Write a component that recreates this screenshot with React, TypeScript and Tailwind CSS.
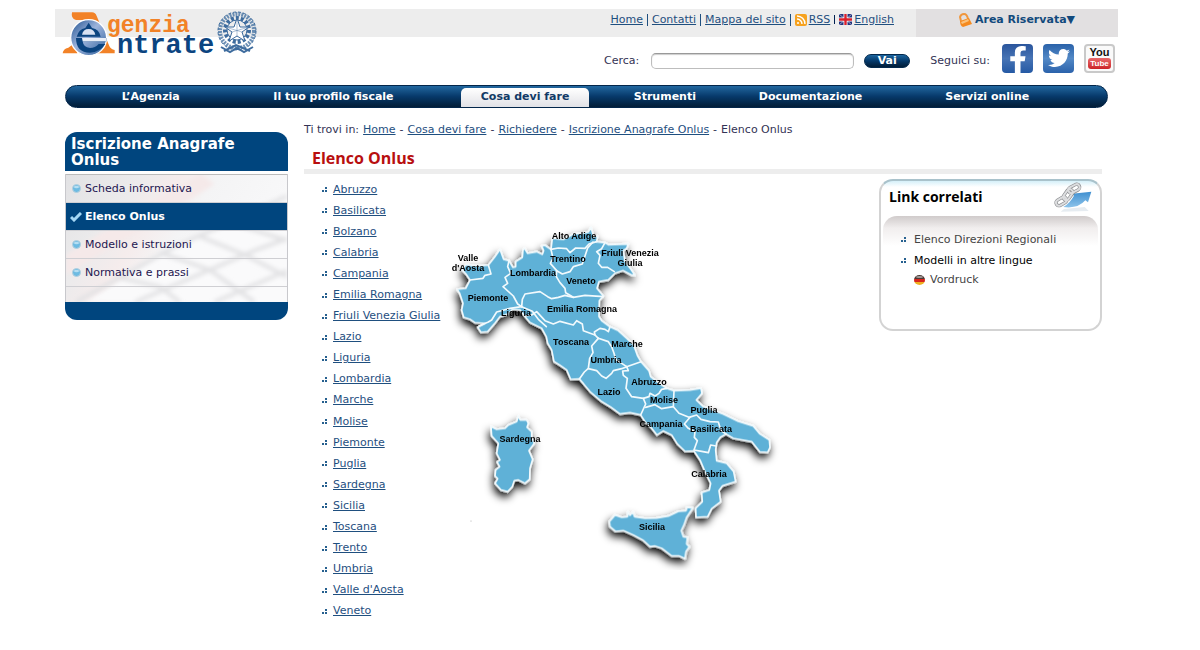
import { ReactNode } from 'react'
import clsx from 'clsx'
import { FaFacebookF, FaTwitter } from 'react-icons/fa'

const menu = [
  { label: 'L’Agenzia' },
  { label: 'Il tuo profilo fiscale', className: 'pr-[30px]' },
  { label: 'Cosa devi fare', active: true },
  { label: 'Strumenti' },
  { label: 'Documentazione' },
  { label: 'Servizi online', className: 'pr-[13px]' },
]

const sections = [
  { label: 'Scheda informativa' },
  { label: 'Elenco Onlus', active: true },
  { label: 'Modello e istruzioni' },
  { label: 'Normativa e prassi' },
]

const crumbs = ['Home', 'Cosa devi fare', 'Richiedere', 'Iscrizione Anagrafe Onlus']

const regions = [
  'Abruzzo',
  'Basilicata',
  'Bolzano',
  'Calabria',
  'Campania',
  'Emilia Romagna',
  'Friuli Venezia Giulia',
  'Lazio',
  'Liguria',
  'Lombardia',
  'Marche',
  'Molise',
  'Piemonte',
  'Puglia',
  'Sardegna',
  'Sicilia',
  'Toscana',
  'Trento',
  'Umbria',
  "Valle d'Aosta",
  'Veneto',
]

const mapLabels: [string, number, number][] = [
  ['Alto Adige', 129, 19],
  ['Trentino', 123, 42],
  ['Friuli Venezia', 185, 36],
  ['Giulia', 185, 46],
  ['Valle', 23, 41],
  ["d'Aosta", 23, 51],
  ['Lombardia', 88, 56],
  ['Veneto', 136, 64],
  ['Piemonte', 43, 81],
  ['Emilia Romagna', 137, 92],
  ['Liguria', 71, 96],
  ['Toscana', 126, 125],
  ['Marche', 182, 127],
  ['Umbria', 161, 143],
  ['Abruzzo', 204, 165],
  ['Lazio', 164, 175],
  ['Molise', 219, 183],
  ['Puglia', 259, 193],
  ['Campania', 216, 207],
  ['Basilicata', 266, 212],
  ['Calabria', 264, 257],
  ['Sardegna', 75, 222],
  ['Sicilia', 207, 310],
]

const mainland =
  'M52 150L62 134L96 138L130 135L150 110L165 88L176 118L192 122L204 142L212 140L212 125L232 112L234 90L239 85L248 100L275 95L292 103L296 92L290 78L300 76L318 88L322 55L355 58L385 42L412 40L430 36L438 22L446 50L458 48L455 65L480 68L490 74L550 72L545 85L535 92L540 125L558 148L570 166L560 165L534 152L510 160L490 180L462 185L456 205L475 228L463 242L462 290L470 302L494 320L520 332L545 355L566 375L578 408L588 425L612 452L617 470L640 488L665 505L687 512L735 510L768 505L771 520L754 540L775 560L835 582L880 604L925 618L945 642L973 660L975 682L968 697L945 696L920 665L865 655L843 642L826 652L815 668L812 690L815 722L845 730L866 755L872 785L832 798L822 812L827 845L800 866L788 890L753 892L752 865L772 845L770 818L793 810L797 790L780 755L765 720L747 693L720 694L697 672L680 645L655 633L636 645L620 625L600 605L587 585L555 578L525 582L498 562L470 545L435 515L416 492L403 477L377 478L365 450L345 436L327 425L320 390L308 370L304 350L290 325L255 308L240 290L225 270L202 268L190 282L165 290L148 312L128 335L108 337L98 322L120 310L90 308L75 298L56 292L50 270L54 250L44 220L36 208L62 205L75 180L65 165Z'

const borders = [
  'M75 180L114 175L120 166L138 162L130 135',
  'M192 122L188 140L197 160L180 172L188 190L174 200L205 228L218 252L230 260',
  'M230 260L232 238L240 222L285 215L308 230L320 236L340 232L360 226L385 232L420 226L475 230',
  'M102 318L130 306L140 300L155 276L195 265L230 260L262 274L280 298L304 320',
  'M318 88L324 115L316 130L335 152L334 170L345 188L360 205L362 218L385 232',
  'M318 88L340 84L365 86L375 98L392 84L420 85L432 72L455 65',
  'M335 152L352 162L375 155L385 140L412 132L420 108L428 84L444 66',
  'M480 68L470 86L455 95L465 106L460 130L470 142L488 142L508 155',
  'M240 288L260 285L275 275L300 302L325 312L345 304L385 315L395 302L412 312L415 332L450 345L460 355',
  'M450 345L448 336L465 325L480 328L490 335L495 320',
  'M460 355L440 378L444 398L434 415L430 445L418 456L403 477',
  'M430 446L455 452L470 468L483 475L500 460L505 452L530 446L545 440',
  'M460 355L490 365L500 380L507 400L512 418L545 440L588 425',
  'M545 440L550 452L533 453L535 466L547 475L543 505L560 530L595 535L602 552L587 585',
  'M595 535L612 530L615 520L630 528L642 520L650 508L665 505',
  'M602 562L630 554L650 566L685 560L687 512',
  'M685 560L702 580L732 592L755 585L768 598L795 605L820 606L828 632L843 642',
  'M735 592L718 612L730 625L750 635L748 652L757 662L747 690L770 694L790 698L797 675L813 678',
]

const sardegna =
  'M78 80L95 88L120 85L130 75L155 65L160 48L166 60L185 60L190 70L186 82L200 95L200 110L208 130L192 152L203 178L195 205L194 238L180 250L160 240L148 242L142 260L128 275L108 270L90 250L98 236L90 228L92 210L104 200L96 186L105 180L95 160L100 130L80 108Z'

const sicilia =
  'M58 275L75 255L95 262L112 260L114 246L120 256L128 246L134 260L165 265L200 264L235 258L265 244L288 242L291 232L308 234L290 262L282 285L274 302L280 320L292 322L290 342L298 350L288 365L285 386L268 378L245 378L215 355L195 348L180 350L158 330L130 315L100 302L76 304L60 290Z'

const Link = ({ children, className }: { children: ReactNode; className?: string }) => (
  <a href="#" className={clsx('text-[#1f4f7f] underline', className)}>
    {children}
  </a>
)

const Logo = () => (
  <svg width="200" height="54" viewBox="0 1 200 54" role="img" aria-label="Agenzia Entrate">
    <defs>
      <linearGradient id="logoBall" x1="0" y1="0" x2="1" y2="1">
        <stop offset="0" stopColor="#1d4f8e" />
        <stop offset="0.45" stopColor="#9db4dc" />
        <stop offset="1" stopColor="#2a5c99" />
      </linearGradient>
    </defs>
    <g transform="scale(.33333) translate(-30 -24)">
      <path d="M66 37H126Q136 37 140 48L177 136Q182 149 194 150V160H140V148H152L118 60H78Q62 56 66 37Z" fill="#f28227" />
      <path d="M38 160Q39 147 55 143L70 132L82 160Z" fill="#f28227" />
      <circle cx="116" cy="113" r="54" fill="url(#logoBall)" stroke="#fff" strokeWidth="4" />
      <path d="M116 68L106 84Q86 88 80 110L152 110Q148 88 126 84Z" fill="#0b4480" />
      <path d="M96 104Q99 87 116 87Q133 87 136 104Z" fill="#d8e1f2" />
      <path d="M78 114Q78 158 120 158Q150 156 166 132H146Q136 144 120 144Q100 142 98 124H170V114Z" fill="#0b4480" />
      <path d="M98 124H170V114H96Z" fill="#e9eef7" />
    </g>
    <text x="47" y="24" fontSize="23" fontWeight="700" className="fill-[#f28227] font-['Liberation_Mono',monospace]">
      genzia
    </text>
    <text x="57" y="45" fontSize="27" fontWeight="700" className="fill-[#0b4480] font-['Liberation_Mono',monospace]">
      ntrate
    </text>
    <g fill="none" stroke="#3e6c9e">
      <circle cx="177" cy="22" r="12" strokeWidth="4" strokeDasharray="3 2" />
      <circle cx="177" cy="22" r="10" />
      <circle cx="177" cy="23" r="17" strokeWidth="4" strokeDasharray="2 1" opacity=".75" />
      <circle cx="177" cy="23" r="19" strokeDasharray="3 2" />
      <path d="M161 39L170 44L177 40L184 44L193 39M164 43L176 37L190 43" strokeWidth="2" />
      <path d="M177 10L180 19H189L182 24L185 33L177 28L169 33L172 24L165 19H174Z" fill="#fff" strokeWidth="1" />
      <path d="M177 10V28M189 19L172 24M165 19L182 24" opacity=".4" />
    </g>
  </svg>
)

const RssIcon = () => (
  <svg width="12" height="12" viewBox="0 0 12 12" aria-hidden="true">
    <rect width="12" height="12" rx="2" fill="#f6a21f" />
    <circle cx="3" cy="9" r="1" fill="#fff" />
    <path d="M2 5A5 5 0 0 1 7 10M2 2A8 8 0 0 1 10 10" fill="none" stroke="#fff" strokeWidth="1.4" />
  </svg>
)

const UkFlag = () => (
  <svg width="13" height="11" viewBox="0 0 13 11" aria-hidden="true">
    <rect width="13" height="11" fill="#24347c" />
    <path d="M0 0L13 11M13 0L0 11" stroke="#9aa2c8" strokeWidth="1" />
    <path d="M6.5 0V11M0 5.5H13" stroke="#fff" strokeWidth="4" />
    <path d="M6.5 0V11M0 5.5H13" stroke="#d8202c" strokeWidth="2.4" />
  </svg>
)

const Padlock = () => (
  <svg width="13" height="15" viewBox="0 0 13 15" aria-hidden="true">
    <path d="M2 8L1 4Q2 1 5 1Q8 1 9 6" fill="none" stroke="#f0963c" strokeWidth="2" />
    <path d="M1 8L10 5L13 11L4 14Q1 13 1 8Z" fill="#f58a1f" />
    <path d="M2 9L9 6L10 8L3 11Z" fill="#fbc27c" />
  </svg>
)

const Bullet = () => (
  <svg width="5" height="5" viewBox="0 0 5 5" className="shrink-0" aria-hidden="true">
    <path d="M0 3H2V5H0ZM3 3H5V5H3ZM3 0H5V2H3Z" fill="#26608f" />
  </svg>
)

const Orb = () => (
  <svg width="9" height="9" viewBox="0 0 9 9" aria-hidden="true">
    <circle cx="4.5" cy="4.5" r="4" fill="#6dbbe2" stroke="#b4cfde" />
    <ellipse cx="4.5" cy="3" rx="2.5" ry="1.2" fill="#b5def2" />
  </svg>
)

const Check = () => (
  <svg width="12" height="10" viewBox="0 0 12 10" className="shrink-0" aria-hidden="true">
    <path d="M1 5L4 8L11 1" fill="none" stroke="#a5d8f5" strokeWidth="3" />
  </svg>
)

const Keyboard = () => (
  <svg className="absolute inset-0 h-full w-full" viewBox="0 0 223 127" preserveAspectRatio="none" aria-hidden="true">
    <defs>
      <linearGradient id="keys" x1="0" y1="0" x2="1" y2="0.4">
        <stop offset="0" stopColor="#e2e2e4" />
        <stop offset="0.3" stopColor="#ecebec" />
        <stop offset="0.45" stopColor="#f5ecec" />
        <stop offset="0.6" stopColor="#f4f4f5" />
        <stop offset="1" stopColor="#f9f9fa" />
      </linearGradient>
      <filter id="soft">
        <feGaussianBlur stdDeviation="2" />
      </filter>
    </defs>
    <rect width="223" height="127" fill="url(#keys)" />
    <path d="M0 80L90 25L135 0L150 10L60 65L0 100Z" fill="#f5e9e9" filter="url(#soft)" />
    <path d="M20 127L110 70L223 20V127Z" fill="#fafafb" filter="url(#soft)" />
    <g stroke="#e2e2e4" strokeWidth="4" fill="none" filter="url(#soft)">
      <path d="M10 127L110 72L223 22M70 127L190 76L223 64M150 127L223 96" />
      <path d="M50 102L95 112L115 127M95 78L145 95L190 127M135 62L180 80L223 102M165 48L223 66" />
    </g>
  </svg>
)

const ChainIcon = () => (
  <svg width="38" height="32" viewBox="0 0 114 96" aria-hidden="true">
    <defs>
      <linearGradient id="arrow" x1="0" y1="0" x2="0" y2="1">
        <stop offset="0" stopColor="#3f8fd0" />
        <stop offset="1" stopColor="#8cc3ea" />
      </linearGradient>
    </defs>
    <path d="M30 84L92 78L104 90L20 92Z" fill="#e6ecf1" />
    <path d="M28 78Q48 66 60 44L54 38L112 32L102 64L94 58Q72 84 28 78Z" fill="url(#arrow)" />
    <g fill="none" stroke="#8a8c8f" strokeWidth="10">
      <rect x="5" y="52" width="34" height="18" rx="9" transform="rotate(-30 22 61)" />
      <rect x="24" y="32" width="36" height="18" rx="9" transform="rotate(-55 42 41)" />
      <rect x="42" y="14" width="36" height="18" rx="9" transform="rotate(-28 60 23)" />
    </g>
    <g fill="none" stroke="#dcdddf" strokeWidth="6">
      <rect x="5" y="52" width="34" height="18" rx="9" transform="rotate(-30 22 61)" />
      <rect x="24" y="32" width="36" height="18" rx="9" transform="rotate(-55 42 41)" />
      <rect x="42" y="14" width="36" height="18" rx="9" transform="rotate(-28 60 23)" />
    </g>
  </svg>
)

const GermanFlag = () => (
  <svg width="11" height="10" viewBox="0 0 11 10" aria-hidden="true">
    <clipPath id="round">
      <ellipse cx="5.5" cy="5" rx="5.5" ry="5" />
    </clipPath>
    <g clipPath="url(#round)">
      <path d="M0 0H11V4H0Z" fill="#4a3a36" />
      <path d="M0 4H11V7H0Z" fill="#d8261c" />
      <path d="M0 7H11V10H0Z" fill="#eeb021" />
      <ellipse cx="5.5" cy="2" rx="3.5" ry="1" fill="#a39a98" />
    </g>
  </svg>
)

const ItalyMap = () => (
  <svg width="340" height="350" viewBox="0 0 340 350" className="shrink-0" role="img" aria-label="Mappa delle regioni">
    <defs>
      <filter id="shadow" x="-10%" y="-10%" width="120%" height="120%">
        <feDropShadow dx="-4" dy="14" stdDeviation="12" floodColor="#000" floodOpacity="1" />
      </filter>
    </defs>
    <g transform="scale(.33333)" strokeLinejoin="round" strokeLinecap="round" stroke="#f2fafd" strokeWidth="5">
      <g fill="#5eb1d7" filter="url(#shadow)">
        <path d={mainland} />
        <path d={sardegna} transform="translate(60 540)" />
        <path d={sicilia} transform="translate(435 630)" />
      </g>
      {borders.map((d) => (
        <path key={d} d={d} fill="none" />
      ))}
    </g>
    <g fontSize="9" fontWeight="700" textAnchor="middle" className="fill-black font-['Liberation_Sans',sans-serif]">
      {mapLabels.map(([name, x, y]) => (
        <text key={name} x={x} y={y}>
          {name}
        </text>
      ))}
    </g>
    <circle cx="26" cy="301" r="0.5" fill="#999" />
  </svg>
)

const Header = () => (
  <header>
    <div className="flex h-7 bg-[#ededed]">
      <div className="h-7 flex-1 pl-[5px]">
        <a href="#" className="inline-block">
          <Logo />
        </a>
      </div>
      <nav className="mr-[22px] flex h-[21px] items-center gap-1 text-[#1f4f7f]">
        <Link>Home</Link>
        <span className="h-3 w-px bg-[#1f4f7f]" />
        <Link>Contatti</Link>
        <span className="h-3 w-px bg-[#1f4f7f]" />
        <Link>Mappa del sito</Link>
        <span className="h-3 w-px bg-[#1f4f7f]" />
        <span className="flex items-center gap-[2px]">
          <RssIcon />
          <Link>RSS</Link>
        </span>
        <span className="h-[9px] w-px bg-[#002050]" />
        <span className="flex items-center gap-[2px]">
          <UkFlag />
          <Link>English</Link>
        </span>
      </nav>
      <div className="flex w-[202px] justify-center bg-[#e2e0e1]">
        <button className="flex h-[22px] items-center gap-[3px] text-[11px] font-bold text-[#124a7c]">
          <Padlock />
          <span>Area Riservata▼</span>
        </button>
      </div>
    </div>

    <div className="mt-[6px] mr-[3px] flex h-9 items-center justify-end">
      <form className="flex items-center">
        <label htmlFor="cerca" className="mr-3">
          Cerca:
        </label>
        <input
          id="cerca"
          type="text"
          className="h-4 w-[203px] rounded-[5px] border border-[#bdbdbd] border-t-[#999] bg-white px-1 shadow-[inset_0_1px_1px_#ccc] outline-none"
        />
        <button
          type="button"
          className="ml-[10px] h-[14px] w-[46px] rounded-full border border-[#03294d] bg-linear-to-b from-[#1d669f] via-[#05396a] to-[#011d38] text-[11px] leading-[12px] font-bold text-white"
        >
          Vai
        </button>
      </form>
      <span className="mr-3 ml-5">Seguici su:</span>
      <div className="mt-[-6px] flex h-[29px] gap-[10px]">
        <a
          href="#"
          aria-label="Facebook"
          className="flex w-[31px] items-end justify-center overflow-hidden rounded-[4px] bg-linear-to-b from-[#2a559c] via-[#4774b5] to-[#2459a4]"
        >
          <FaFacebookF className="h-[27px] w-[18px] text-white" preserveAspectRatio="none" />
        </a>
        <a
          href="#"
          aria-label="Twitter"
          className="flex w-[31px] items-center justify-center rounded-[4px] bg-linear-to-b from-[#2a62a9] via-[#5389c6] to-[#2b62ab]"
        >
          <FaTwitter className="size-[22px] text-white" />
        </a>
        <a
          href="#"
          className="flex w-[31px] flex-col items-center rounded-[4px] border-2 border-[#c9c9c9] bg-[#fafafa] pt-px font-['Liberation_Sans',sans-serif] font-bold text-[#111]"
        >
          <span className="text-[11px] leading-[11px]">You</span>
          <span className="rounded-[3px] bg-linear-to-b from-[#e8676a] to-[#cc2027] px-[2px] text-[8px] leading-[11px] text-white">
            Tube
          </span>
        </a>
      </div>
    </div>
  </header>
)

const MainMenu = () => (
  <nav className="mx-[10px] mt-[6px] rounded-full border border-[#03264a] bg-linear-to-b from-[#2268a0] via-[#07396a] via-50% to-[#021d37]">
    <ul className="grid h-[21px] grid-cols-[170fr_226fr_128fr_152fr_140fr_227fr] text-center text-[11px] leading-[22px] font-bold text-white">
      {menu.map((item) => (
        <li key={item.label} className={item.className}>
          <a
            href="#"
            className={clsx(
              'block',
              item.active && 'mt-[2px] h-[19px] rounded-t-[5px] bg-linear-to-b from-white to-[#e2e2e6] leading-[18px] text-[#123a66]',
            )}
          >
            {item.label}
          </a>
        </li>
      ))}
    </ul>
  </nav>
)

const Sidebar = () => (
  <aside className="w-[223px] shrink-0 pt-3">
    <h2 className="h-[39px] rounded-t-[12px] bg-[#00457e] px-[6px] pt-1 text-[15px] leading-4 font-bold text-white">
      Iscrizione Anagrafe Onlus
    </h2>
    <div className="relative mt-[3px] border-x border-[#c8c8cc] pb-[15px]">
      <Keyboard />
      <ul className="relative border-t border-[#bbb]">
        {sections.map((item) => (
          <li key={item.label} className="border-b border-[#cfcfd3]">
            <a
              href="#"
              className={clsx(
                'flex h-[27px] items-center gap-1 pl-[5px] text-[11px] text-[#1e1650]',
                item.active && 'bg-[#00457e] font-bold text-white',
              )}
            >
              <span className="flex w-[10px] justify-center">{item.active ? <Check /> : <Orb />}</span>
              {item.label}
            </a>
          </li>
        ))}
      </ul>
    </div>
    <div className="h-[18px] rounded-b-[12px] bg-[#00457e]" />
  </aside>
)

const RelatedLinks = () => (
  <aside className="mt-[5px] h-[152px] w-[223px] shrink-0 rounded-[14px] border-2 border-[#d3d3d3] border-t-[#a9c2cb] bg-linear-to-b from-[#d5f0f9] to-white to-[6px]">
    <div className="flex h-[35px] items-start justify-between px-2">
      <h2 className="font-['Open_Sans',sans-serif] text-[14px] leading-8 font-bold text-black">Link correlati</h2>
      <ChainIcon />
    </div>
    <div className="mx-[2px] rounded-t-[14px] bg-linear-to-b from-[#d0cbcb] via-[#f1eeee] via-[12px] to-white to-[30px] pt-[13px] pl-[18px] text-[11px] text-[#444]">
      <ul>
        <li className="flex h-[21px] items-center gap-2">
          <Bullet />
          <a href="#">Elenco Direzioni Regionali</a>
        </li>
        <li>
          <div className="flex h-[21px] items-center gap-2 text-black">
            <Bullet />
            Modelli in altre lingue
          </div>
          <a href="#" className="ml-[13px] flex h-[18px] items-center gap-[5px]">
            <GermanFlag />
            Vordruck
          </a>
        </li>
      </ul>
    </div>
  </aside>
)

export default function App() {
  return (
    <div className="bg-white pt-[9px] pr-[82px] pb-8 pl-[55px] font-['DejaVu_Sans',Verdana,sans-serif] text-[11px] leading-4 text-[#333355]">
      <Header />
      <MainMenu />
      <div className="mt-3 mr-4 ml-[10px] flex gap-4">
        <Sidebar />
        <main className="min-w-0 flex-1 pt-[2px]">
          <nav className="flex gap-1">
            <span>Ti trovi in:</span>
            {crumbs.map((crumb) => (
              <span key={crumb} className="flex gap-1">
                <Link>{crumb}</Link>
                <span>-</span>
              </span>
            ))}
            <span>Elenco Onlus</span>
          </nav>
          <h1 className="mt-[10px] border-b-[5px] border-[#ededed] pl-2 font-['Open_Sans',sans-serif] text-[16px] leading-[21px] font-bold text-[#b80f0f]">
            Elenco Onlus
          </h1>
          <div className="flex">
            <ul className="mt-[5px] ml-[18px] grid h-[443px] w-[123px] shrink-0 auto-rows-fr">
              {regions.map((region) => (
                <li key={region} className="flex items-center gap-[6px] whitespace-nowrap">
                  <Bullet />
                  <Link>{region}</Link>
                </li>
              ))}
            </ul>
            <div className="flex-1 pt-[46px]">
              <ItalyMap />
            </div>
            <RelatedLinks />
          </div>
        </main>
      </div>
    </div>
  )
}
